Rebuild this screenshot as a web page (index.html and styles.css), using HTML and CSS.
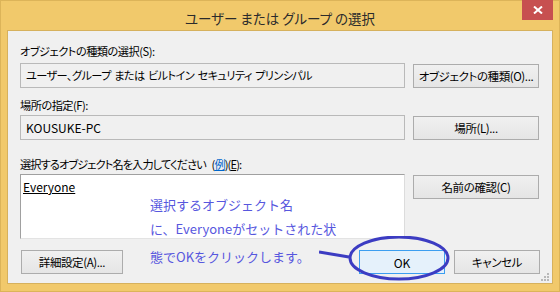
FILE: index.html
```html
<!DOCTYPE html>
<html lang="ja">

<head>
  <meta charset="UTF-8">
  <title>ユーザー または グループ の選択</title>
  <link rel="stylesheet" href="styles.css">
</head>

<body>
  <div class="window">
    <!-- Title bar -->
    <div class="titlebar">
      <span class="title">ユーザー または グループ の選択</span>
      <button class="close" aria-label="閉じる">
        <svg width="10" height="8" viewBox="0 0 10 8">
          <path d="M1 0.5 L9 7.5 M9 0.5 L1 7.5" stroke="#fff" stroke-width="2" />
        </svg>
      </button>
    </div>

    <!-- Dialog body -->
    <div class="client">
      <div class="label first">オブジェクトの種類の選択(S):</div>
      <div class="row">
        <div class="field readonly spaced">ユーザー、グループ または ビルトイン セキュリティ プリンシパル</div>
        <button class="btn">オブジェクトの種類(O)...</button>
      </div>

      <div class="label second">場所の指定(F):</div>
      <div class="row">
        <div class="field readonly latin">KOUSUKE-PC</div>
        <button class="btn">場所(L)...</button>
      </div>

      <div class="label third">選択するオブジェクト名を入力してください (<a class="link">例</a>)(<u>E</u>):</div>
      <div class="row tall">
        <div class="field names latin"><u>Everyone</u></div>
        <button class="btn">名前の確認(C)</button>
      </div>

      <div class="actions">
        <button class="btn advanced">詳細設定(A)...</button>
        <button class="btn ok">OK</button>
        <button class="btn cancel">キャンセル</button>
      </div>

      <!-- Annotation drawn over the dialog -->
      <div class="note">
        <span class="line1">選択するオブジェクト名</span>
        <span class="line2">に、Everyoneがセットされた状</span>
        <span class="line3">態でOKをクリックします。</span>
      </div>
      <svg class="mark" width="140" height="60" viewBox="0 0 140 60">
        <path d="M0 16 L30 21" stroke="#3c3cc2" stroke-width="3" fill="none" />
        <ellipse cx="80" cy="22" rx="49" ry="21" stroke="#3c3cc2" stroke-width="3" fill="none" />
      </svg>

      <div class="grip">
        <svg width="10" height="10" viewBox="0 0 10 10" fill="#b8b8b8">
          <rect x="7" y="1" width="2" height="2" />
          <rect x="4" y="4" width="2" height="2" />
          <rect x="7" y="4" width="2" height="2" />
          <rect x="1" y="7" width="2" height="2" />
          <rect x="4" y="7" width="2" height="2" />
          <rect x="7" y="7" width="2" height="2" />
        </svg>
      </div>
    </div>
  </div>
</body>

</html>
```

FILE: styles.css
```css
body {
  margin: 0;
  padding: 0;
  width: 560px;
  height: 292px;
  overflow: hidden;
  font-family: 'Noto Sans CJK JP', 'Noto Sans', sans-serif;
  font-feature-settings: "palt";
  color: #000;
}

/* Outer window frame */
.window {
  box-sizing: border-box;
  width: 560px;
  height: 292px;
  background: #f1c96b;
  border: 1px solid #dcb459;
  display: flex;
  flex-direction: column;
}

.titlebar {
  height: 29px;
  display: grid;
  grid-template-columns: 1fr auto 1fr;
}

.title {
  grid-column: 2;
  font-size: 13.5px;
  line-height: 16px;
  padding-top: 9px;
  color: #2b2b2b;
  white-space: nowrap;
}

.close {
  grid-column: 3;
  justify-self: end;
  align-self: start;
  width: 31px;
  height: 20px;
  margin: -1px 6px 0 0;
  border: none;
  padding: 0;
  background: #c75050;
  display: flex;
  align-items: center;
  justify-content: center;
}

/* Grey client area */
.client {
  position: relative;
  box-sizing: border-box;
  margin: 0 6px 0 6px;
  height: 254px;
  background: #f0f0f0;
  border: 1px solid #d6b15d;
  padding: 0 12px 0 12px;
  font-size: 11.2px;
  letter-spacing: -0.5px;
}

.label {
  line-height: 16px;
  height: 16px;
  white-space: nowrap;
}

.label.first { margin-top: 12px; margin-bottom: 4px; }
.label.second { margin-top: 9px; margin-bottom: 2px; }
.label.third { margin-top: 16px; margin-bottom: 2px; letter-spacing: -0.9px; word-spacing: 4px; }

.link {
  color: #0066cc;
  text-decoration: underline;
}

.row {
  display: flex;
  gap: 8px;
  align-items: flex-start;
}

.field {
  box-sizing: border-box;
  width: 385px;
  height: 25px;
  border: 1px solid #b9b9b9;
  padding: 3px 5px;
  line-height: 17px;
  white-space: nowrap;
}

.spaced {
  word-spacing: 1.5px;
  letter-spacing: -0.6px;
}

.latin {
  font-size: 12px;
  letter-spacing: 0;
}

.readonly {
  background: #f0f0f0;
}

.names {
  height: 65px;
  background: #fff;
  border-color: #a0a0a0 #dcdcdc #e3e3e3 #a0a0a0;
  padding: 3px 2px;
}

.btn {
  box-sizing: border-box;
  width: 126px;
  height: 24px;
  margin-top: 1px;
  padding: 0;
  border: 1px solid #acacac;
  background: linear-gradient(#f0f0f0, #e5e5e5);
  font-family: inherit;
  font-feature-settings: "palt";
  font-size: 11.5px;
  letter-spacing: -0.4px;
  color: #000;
  text-align: center;
  white-space: nowrap;
}

.row:first-of-type .btn { margin-top: 0; }

.actions {
  display: flex;
  gap: 9px;
  margin-top: 10px;
  padding-left: 1px;
}

.advanced { width: 102px; }

.ok {
  width: 86px;
  margin-left: auto;
  border-color: #3c9ef0;
  background: #e5f1fb;
  font-size: 12px;
  letter-spacing: 0;
}

.cancel { width: 86px; }

/* Blue explanatory note */
.note {
  position: absolute;
  left: 142px;
  top: 166px;
  color: #5757de;
  font-size: 13px;
  font-feature-settings: normal;
  letter-spacing: 0;
  word-spacing: 0;
  line-height: 16px;
  white-space: nowrap;
}

.note span { display: block; }
.note .line2 { margin-top: 8px; }
.note .line3 { margin-top: 12px; }

.mark {
  position: absolute;
  left: 311px;
  top: 205px;
}

.grip {
  position: absolute;
  right: 2px;
  bottom: 1px;
  line-height: 0;
}
```
